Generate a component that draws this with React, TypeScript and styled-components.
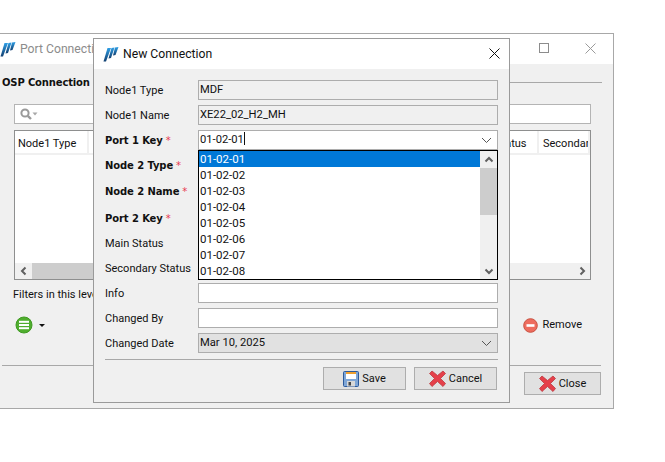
import React from "react";
import styled, { createGlobalStyle } from "styled-components";

const Global = createGlobalStyle`
  html, body { margin: 0; padding: 0; background: #fff; }
  body { font-family: Roboto, "Noto Sans", sans-serif; font-size: 11px; color: #111; }
  * { box-sizing: border-box; }
`;

const Desktop = styled.div`
  position: relative;
  width: 665px;
  height: 462px;
  overflow: hidden;
`;

const BackWindow = styled.div`
  position: absolute;
  left: -1px;
  top: 33px;
  width: 615px;
  height: 376px;
  background: #f0f0f0;
  border: 1px solid #a8a8a8;
  display: flex;
  flex-direction: column;
`;

const BackTitle = styled.div`
  height: 30px;
  flex: none;
  background: #fff;
  display: flex;
  align-items: center;
  gap: 4px;
  color: #8c8c8c;
  font-size: 12.2px;
`;

const TitleText = styled.span`
  white-space: nowrap;
`;

const WinControls = styled.div`
  margin-left: auto;
  display: flex;
  align-items: center;
  gap: 36px;
  padding-right: 17px;
  margin-top: -2px;
`;

const BackBody = styled.div`
  flex: 1;
  display: flex;
  flex-direction: column;
  min-height: 0;
`;

const Legend = styled.div`
  height: 40px;
  flex: none;
  padding: 12px 11px 0 2px;
  display: flex;
  align-items: flex-start;
  gap: 7px;
  font-family: "DejaVu Sans", sans-serif;
  font-weight: 700;
  font-size: 10px;
  letter-spacing: -0.15px;
  line-height: 13px;
  &::after {
    content: "";
    flex: 1;
    border-top: 1px solid #a8a8a8;
    margin-top: 6px;
  }
`;

const SearchBar = styled.div`
  margin: 0 22px 0 14px;
  height: 20px;
  flex: none;
  background: #fff;
  border: 1px solid #b4b4b4;
  display: flex;
  align-items: center;
  padding-left: 4px;
`;

const TableBox = styled.div`
  margin: 6px 22px 0 14px;
  height: 150px;
  flex: none;
  background: #fff;
  border: 1px solid #8e8f8f;
  display: flex;
  flex-direction: column;
`;

const TableHead = styled.div`
  height: 24px;
  flex: none;
  display: grid;
  grid-template-columns: 74px 1fr 75px 51px;
  background: #fff;
`;

const HeadCell = styled.div<{ $pad?: number }>`
  background: #fff;
  border-right: 2px solid #f0f0f0;
  border-bottom: 2px solid #f0f0f0;
  padding: 0 0 0 ${(p) => p.$pad ?? 4}px;
  line-height: 25px;
  white-space: nowrap;
  overflow: hidden;
`;

const TableFill = styled.div`
  flex: 1;
`;

const HScroll = styled.div`
  height: 16px;
  flex: none;
  display: flex;
  align-items: stretch;
  background: #f0f0f0;
`;

const ScrollBtn = styled.div`
  width: 17px;
  flex: none;
  display: flex;
  align-items: center;
  justify-content: center;
`;

const HThumb = styled.div`
  width: 80px;
  background: #cdcdcd;
`;

const HTrack = styled.div`
  flex: 1;
`;

const FilterLabel = styled.div`
  padding: 7px 0 0 13px;
  height: 28px;
  flex: none;
  line-height: 16px;
`;

const ActionRow = styled.div`
  height: 57px;
  flex: none;
  display: flex;
  align-items: flex-start;
  padding: 8px 31px 0 15px;
`;

const RemoveAction = styled.div`
  margin-left: auto;
  display: flex;
  align-items: center;
  gap: 4px;
  line-height: 18px;
`;

const Caret = styled.span`
  width: 0;
  height: 0;
  margin: 8px 0 0 6px;
  border-left: 3px solid transparent;
  border-right: 3px solid transparent;
  border-top: 3px solid #111;
`;

const BackFooter = styled.div`
  margin: 0 12px 0 2px;
  border-top: 1px solid #a8a8a8;
  padding-top: 6px;
  display: flex;
  justify-content: flex-end;
`;

const Button = styled.button<{ $w: number }>`
  width: ${(p) => p.$w}px;
  height: 23px;
  background: #e1e1e1;
  border: 1px solid #adadad;
  display: flex;
  align-items: center;
  justify-content: center;
  gap: 3px;
  padding: 0;
  font: inherit;
  color: #111;
`;

const Dialog = styled.div`
  position: absolute;
  left: 93px;
  top: 38px;
  width: 417px;
  height: 365px;
  background: #f0f0f0;
  border: 1px solid #9a9a9a;
  display: flex;
  flex-direction: column;
`;

const DialogTitle = styled.div`
  height: 30px;
  flex: none;
  background: #fff;
  display: flex;
  align-items: center;
  padding: 0 9px 0 9px;
  gap: 4px;
  font-size: 12.2px;
  color: #111;
`;

const CloseX = styled.span`
  margin-left: auto;
  display: flex;
  margin-top: -2px;
`;

const Form = styled.div`
  position: relative;
  flex: 1;
  padding: 11px 11px 0 11px;
  display: flex;
  flex-direction: column;
`;

const Row = styled.div<{ $h?: number }>`
  height: ${(p) => p.$h ?? 25}px;
  flex: none;
  display: grid;
  grid-template-columns: 93px 300px;
  align-items: start;
`;

const Label = styled.div<{ $req?: boolean }>`
  line-height: 20px;
  padding-top: 1px;
  white-space: nowrap;
  ${(p) =>
    p.$req &&
    `font-family: "DejaVu Sans", sans-serif; font-weight: 700; font-size: 10px; letter-spacing: -0.1px;`}
`;

const Star = styled.span`
  color: #e8384f;
  font-weight: 400;
  margin-left: 3px;
`;

const Field = styled.div<{ $kind?: "ro" | "date" }>`
  height: 20px;
  border: 1px solid #adadad;
  background: ${(p) =>
    p.$kind === "ro" ? "#f0f0f0" : p.$kind === "date" ? "#e1e1e1" : "#fff"};
  line-height: 18px;
  display: flex;
  align-items: center;
  justify-content: space-between;
  padding-right: 5px;
  font-size: 11.2px;
`;

const FieldValue = styled.span`
  padding-left: 1px;
  white-space: nowrap;
`;

const CaretBar = styled.span`
  display: inline-block;
  width: 1px;
  height: 13px;
  background: #111;
  vertical-align: -2px;
`;

const ListPopup = styled.div`
  position: absolute;
  left: 104px;
  top: 81px;
  width: 300px;
  height: 130px;
  background: #fff;
  border: 1px solid #000;
  display: flex;
  z-index: 2;
`;

const ListItems = styled.div`
  flex: 1;
  min-width: 0;
`;

const ListItem = styled.div<{ $sel?: boolean }>`
  height: 16px;
  line-height: 16px;
  padding-left: 1px;
  font-size: 11.5px;
  background: ${(p) => (p.$sel ? "#0078d7" : "transparent")};
  color: ${(p) => (p.$sel ? "#fff" : "#111")};
`;

const VScroll = styled.div`
  width: 17px;
  flex: none;
  background: #f0f0f0;
  display: flex;
  flex-direction: column;
`;

const VBtn = styled.div`
  height: 17px;
  flex: none;
  display: flex;
  align-items: center;
  justify-content: center;
`;

const VThumb = styled.div`
  height: 47px;
  flex: none;
  background: #cdcdcd;
`;

const VTrack = styled.div`
  flex: 1;
`;

const Sep = styled.div`
  height: 1px;
  background: #a8a8a8;
  margin-top: 5px;
  flex: none;
`;

const Buttons = styled.div`
  display: flex;
  justify-content: flex-end;
  gap: 8px;
  padding: 7px 1px 0 0;
`;

const Logo = () => (
  <svg width="16" height="15" viewBox="0 0 16 15">
    <defs>
      <linearGradient id="lg" x1="0" y1="0" x2="0" y2="1">
        <stop offset="0" stopColor="#2f9fe6" />
        <stop offset="1" stopColor="#123f70" />
      </linearGradient>
    </defs>
    <path d="M4.5 1 L8 1 L3 14.5 L0.5 14.5 Z" fill="url(#lg)" />
    <path d="M8.5 1 L11.5 0.5 L8 11 L5.5 11.5 Z" fill="url(#lg)" />
    <path d="M12 0.5 L15.5 0 L12.5 8 L10 8.5 Z" fill="url(#lg)" />
  </svg>
);

const Chevron = ({ dir, color = "#606060" }: { dir: "up" | "down" | "left" | "right"; color?: string }) => {
  const d = {
    up: "M1.5 6.5 L5 3 L8.5 6.5",
    down: "M1.5 3.5 L5 7 L8.5 3.5",
    left: "M6.5 1.5 L3 5 L6.5 8.5",
    right: "M3.5 1.5 L7 5 L3.5 8.5",
  }[dir];
  return (
    <svg width="10" height="10" viewBox="0 0 10 10">
      <path d={d} fill="none" stroke={color} strokeWidth="2" />
    </svg>
  );
};

const ComboArrow = () => (
  <svg width="11" height="7" viewBox="0 0 11 7">
    <path d="M1 1 L5.5 5.5 L10 1" fill="none" stroke="#555" strokeWidth="1" />
  </svg>
);

const SearchIcon = () => (
  <svg width="20" height="14" viewBox="0 0 20 14">
    <circle cx="6" cy="6" r="3.6" fill="none" stroke="#9a9a9a" strokeWidth="2" />
    <path d="M8.8 8.8 L12 12" stroke="#9a9a9a" strokeWidth="2.4" />
    <path d="M13.5 5.5 h5 l-2.5 3 z" fill="#a8a8a8" />
  </svg>
);

const MenuIcon = () => (
  <svg width="18" height="18" viewBox="0 0 18 18">
    <circle cx="9" cy="9" r="8" fill="#4fae2e" stroke="#3f9a22" />
    <rect x="4" y="4.8" width="10" height="2" fill="#fff" />
    <rect x="4" y="8" width="10" height="2" fill="#fff" />
    <rect x="4" y="11.2" width="10" height="2" fill="#fff" />
  </svg>
);

const RemoveIcon = () => (
  <svg width="15" height="15" viewBox="0 0 15 15">
    <circle cx="7.5" cy="7.5" r="6.8" fill="#ee6c5e" stroke="#c9503f" />
    <rect x="3.5" y="6.2" width="8" height="2.6" fill="#fff" />
  </svg>
);

const RedX = () => (
  <svg width="17" height="17" viewBox="0 0 17 17">
    <path
      d="M3 1 L8.5 5.5 L14 1 L16.5 3.5 L11.5 8.5 L16.5 13.5 L14 16.5 L8.5 11.5 L3 16.5 L0.5 13.5 L5.5 8.5 L0.5 3.5 Z"
      fill="#e5404a"
      stroke="#bb3a40"
      strokeWidth="0.8"
      strokeLinejoin="round"
    />
  </svg>
);

const Floppy = () => (
  <svg width="16" height="16" viewBox="0 0 16 16">
    <rect x="0.5" y="0.5" width="15" height="15" rx="1" fill="#7fa6d6" stroke="#2c5a9c" />
    <rect x="3" y="1" width="10" height="7" fill="#fff" />
    <rect x="3" y="1" width="10" height="2" fill="#f0a030" />
    <rect x="4" y="10" width="8" height="5.5" fill="#d8d8d8" />
    <rect x="5.5" y="11" width="2.5" height="3.5" fill="#444" />
  </svg>
);

const items = ["01-02-01", "01-02-02", "01-02-03", "01-02-04", "01-02-05", "01-02-06", "01-02-07", "01-02-08"];

export default function App() {
  return (
    <Desktop>
      <Global />
      <BackWindow>
        <BackTitle>
          <Logo />
          <TitleText>Port Connections</TitleText>
          <WinControls>
            <svg width="10" height="10" viewBox="0 0 10 10">
              <rect x="0.5" y="0.5" width="9" height="9" fill="none" stroke="#8c8c8c" />
            </svg>
            <svg width="11" height="11" viewBox="0 0 11 11">
              <path d="M0.5 0.5 L10.5 10.5 M10.5 0.5 L0.5 10.5" stroke="#9a9a9a" />
            </svg>
          </WinControls>
        </BackTitle>
        <BackBody>
          <Legend>OSP Connection</Legend>
          <SearchBar>
            <SearchIcon />
          </SearchBar>
          <TableBox>
            <TableHead>
              <HeadCell $pad={3}>Node1 Type</HeadCell>
              <HeadCell />
              <HeadCell>Main Status</HeadCell>
              <HeadCell>Secondary Status</HeadCell>
            </TableHead>
            <TableFill />
            <HScroll>
              <ScrollBtn>
                <Chevron dir="left" />
              </ScrollBtn>
              <HThumb />
              <HTrack />
              <ScrollBtn>
                <Chevron dir="right" />
              </ScrollBtn>
            </HScroll>
          </TableBox>
          <FilterLabel>Filters in this level</FilterLabel>
          <ActionRow>
            <MenuIcon />
            <Caret />
            <RemoveAction>
              <RemoveIcon />
              Remove
            </RemoveAction>
          </ActionRow>
          <BackFooter>
            <Button $w={77}>
              <RedX />
              Close
            </Button>
          </BackFooter>
        </BackBody>
      </BackWindow>

      <Dialog>
        <DialogTitle>
          <Logo />
          New Connection
          <CloseX>
            <svg width="11" height="11" viewBox="0 0 11 11">
              <path d="M0.5 0.5 L10.5 10.5 M10.5 0.5 L0.5 10.5" stroke="#111" />
            </svg>
          </CloseX>
        </DialogTitle>
        <Form>
          <Row>
            <Label>Node1 Type</Label>
            <Field $kind="ro"><FieldValue>MDF</FieldValue></Field>
          </Row>
          <Row>
            <Label>Node1 Name</Label>
            <Field $kind="ro"><FieldValue>XE22_02_H2_MH</FieldValue></Field>
          </Row>
          <Row>
            <Label $req>Port 1 Key<Star>*</Star></Label>
            <Field>
              <FieldValue>01-02-01<CaretBar /></FieldValue>
              <ComboArrow />
            </Field>
          </Row>
          <Row $h={26}>
            <Label $req>Node 2 Type<Star>*</Star></Label>
          </Row>
          <Row $h={27}>
            <Label $req>Node 2 Name<Star>*</Star></Label>
          </Row>
          <Row>
            <Label $req>Port 2 Key<Star>*</Star></Label>
          </Row>
          <Row>
            <Label>Main Status</Label>
          </Row>
          <Row>
            <Label>Secondary Status</Label>
          </Row>
          <Row>
            <Label>Info</Label>
            <Field />
          </Row>
          <Row>
            <Label>Changed By</Label>
            <Field />
          </Row>
          <Row $h={21}>
            <Label>Changed Date</Label>
            <Field $kind="date">
              <FieldValue>Mar 10, 2025</FieldValue>
              <ComboArrow />
            </Field>
          </Row>
          <Sep />
          <Buttons>
            <Button $w={83}>
              <Floppy />
              Save
            </Button>
            <Button $w={83}>
              <RedX />
              Cancel
            </Button>
          </Buttons>
          <ListPopup>
            <ListItems>
              {items.map((t, i) => (
                <ListItem key={t} $sel={i === 0}>{t}</ListItem>
              ))}
            </ListItems>
            <VScroll>
              <VBtn><Chevron dir="up" /></VBtn>
              <VThumb />
              <VTrack />
              <VBtn><Chevron dir="down" /></VBtn>
            </VScroll>
          </ListPopup>
        </Form>
      </Dialog>
    </Desktop>
  );
}
